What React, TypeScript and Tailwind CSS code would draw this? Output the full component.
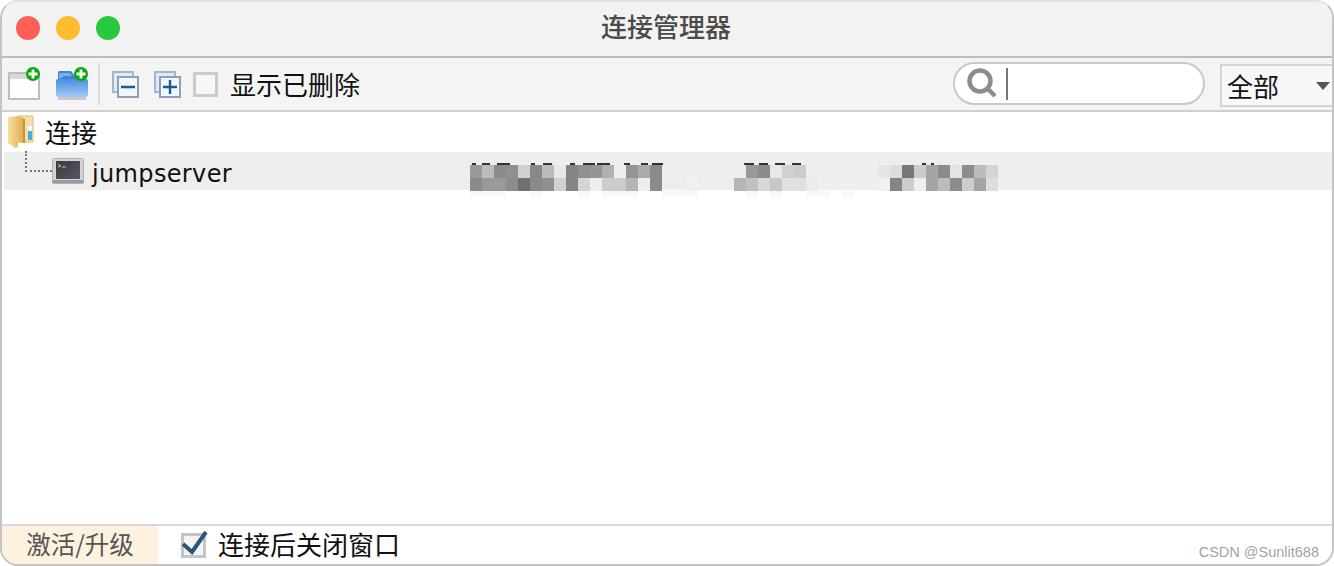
import React from 'react';

const cjk = { fontFamily: '"Noto Sans CJK SC", sans-serif' };
const dejavu = { fontFamily: '"DejaVu Sans", sans-serif' };

// mosaic over the host / port / user columns, 12px cells, null = nothing drawn
const mosaicTop: (string | null)[] = [
  '#999', '#bbb', '#8c8c8c', '#909090', '#d0d0d0', '#888', '#bbb', '#e8e8e8', '#858585', '#909090', '#959595', '#b0b0b0', null, '#959595', '#aaa', '#8a8a8a',
  null, null, null, null, null, null, null,
  '#999', '#8c8c8c', '#e8e8e8', '#d0d0d0', '#ccc',
  null, null, null, null, null, null,
  '#e6e6e6', '#ddd', '#777', '#ccc', '#a5a5a5', '#8a8a8a', '#e4e4e4', '#8c8c8c', '#bbb', '#d4d4d4',
];
const mosaicMid: (string | null)[] = [
  '#8a8a8a', '#999', '#999', '#8c8c8c', '#707070', '#8a8a8a', '#909090', '#d0d0d0', '#858585', '#d5d5d5', '#eee', '#ccc', '#ccc', '#b5b5b5', '#eee', '#8a8a8a',
  null, null, '#f0f0f0', null, null, null,
  '#b5b5b5', '#c0c0c0', '#d8d8d8', '#c8c8c8', '#e0e0e0', '#e0e0e0',
  '#ebebeb', null, null, null, null, null,
  '#f0f0f0', '#858585', '#ccc', '#eee', '#a5a5a5', '#bbb', '#8c8c8c', '#ccc', '#a5a5a5', '#ddd',
];
const mosaicLow: (string | null)[] = [
  '#f8f8f8', '#f8f8f8', '#f8f8f8', null, null, '#f8f8f8', null, null, null, '#f8f8f8', null, '#f8f8f8', '#f8f8f8', '#f8f8f8', null, null,
  '#f8f8f8', '#f8f8f8', '#f8f8f8', null, null, null,
  null, '#f8f8f8', null, '#f8f8f8', null, null,
  '#f8f8f8', '#f8f8f8', null, '#f8f8f8', null, null,
  null, null, null, null, null, null, null, null, null, null,
];

// dark specks above the mosaic, [left, width] inside the row
const specks: [number, number][] = [
  [468, 4], [478, 8], [493, 13], [527, 4], [539, 9], [566, 5], [579, 12], [593, 13], [620, 6], [637, 7], [648, 11],
  [740, 10], [755, 9], [771, 10], [788, 9], [918, 4], [927, 3],
];

const MosaicRow = ({ cells, h }: { cells: (string | null)[]; h: string }) => (
  <div className={`flex ${h}`}>
    {cells.map((c, i) => (
      <div key={i} className="w-[12px] shrink-0" style={{ backgroundColor: c ?? 'transparent' }} />
    ))}
  </div>
);

const GreenPlus = ({ x, y }: { x: number; y: number }) => (
  <g transform={`translate(${x} ${y})`}>
    <circle cx="0" cy="0" r="7" fill="#0aa80a" />
    <path d="M-4.5 0H4.5M0 -4.5V4.5" stroke="#fff" strokeWidth="2.8" />
  </g>
);

const NewSessionIcon = () => (
  <svg width="34" height="34" viewBox="0 0 34 34" className="shrink-0">
    <rect x="1" y="6" width="30" height="26" fill="#fff" stroke="#bdbdbd" strokeWidth="2" />
    <rect x="2" y="7" width="28" height="5" fill="#d8d8d8" />
    <GreenPlus x={25} y={7} />
  </svg>
);

const NewFolderIcon = () => (
  <svg width="34" height="34" viewBox="0 0 34 34" className="shrink-0">
    <defs>
      <linearGradient id="fold" x1="0" y1="0" x2="0" y2="1">
        <stop offset="0" stopColor="#4a8fe0" />
        <stop offset="1" stopColor="#a4c8f4" />
      </linearGradient>
    </defs>
    <path d="M3 4H15L18 8H30V14H2V5Z" fill="#3b84dc" />
    <path d="M3 6H14L16 9H8L3 12Z" fill="#7db0ea" />
    <rect x="0" y="12" width="32" height="18" rx="2" fill="url(#fold)" />
    <rect x="2" y="30" width="28" height="3" fill="#c9c9c9" />
    <GreenPlus x={25} y={7} />
  </svg>
);

const StackIcon = ({ plus }: { plus?: boolean }) => (
  <svg width="28" height="28" viewBox="0 0 28 28" className="shrink-0">
    <rect x="1" y="1" width="20" height="20" fill="#d9edf8" stroke="#a5b4cc" strokeWidth="2" />
    <rect x="6" y="6" width="20" height="20" fill="#eef7fc" stroke="#929eb8" strokeWidth="2" />
    <path d={plus ? 'M9 16H23M16 9V23' : 'M9 16H23'} stroke="#1f5a8a" strokeWidth="2.4" />
  </svg>
);

const TreeFolderIcon = () => (
  <svg width="28" height="34" viewBox="0 0 28 34" className="shrink-0">
    <defs>
      <linearGradient id="tf" x1="0" y1="0" x2="1" y2="0">
        <stop offset="0" stopColor="#f8df9c" />
        <stop offset="1" stopColor="#dca94a" />
      </linearGradient>
    </defs>
    <path d="M11 1H26V27H11Z" fill="#f6e0a8" stroke="#e0c070" />
    <rect x="21" y="15" width="4" height="10" fill="#3fb0e0" />
    <rect x="21" y="11" width="4" height="5" fill="#fff" />
    <path d="M1 2L11 1L18 4V28L11 27V32L8 33L1 28Z" fill="url(#tf)" />
    <path d="M17 4V28" stroke="#c48f2c" strokeWidth="1.5" />
  </svg>
);

const TerminalIcon = () => (
  <svg width="32" height="26" viewBox="0 0 32 26" className="shrink-0">
    <defs>
      <linearGradient id="tm" x1="0" y1="0" x2="1" y2="1">
        <stop offset="0" stopColor="#3a3a3a" />
        <stop offset="1" stopColor="#55566a" />
      </linearGradient>
    </defs>
    <rect x="0.5" y="0.5" width="31" height="25" rx="1" fill="#d4d4d4" stroke="#b0b0b0" />
    <rect x="4" y="3" width="24" height="18" fill="url(#tm)" />
    <rect x="0.5" y="22" width="31" height="3" fill="#9a9a9a" />
    <path d="M6 6L9 8L6 9M10 9H14" stroke="#bdbdbd" strokeWidth="1" fill="none" />
  </svg>
);

export default function App() {
  return (
    <div className="h-[566px] w-[1334px] bg-white overflow-hidden">
      <div className="h-full flex flex-col rounded-[18px] border-2 border-[#c4c4c4] border-t-[#e4e4e4] overflow-hidden bg-white" style={cjk}>
        {/* Title bar */}
        <div className="h-[56px] shrink-0 bg-[#f2f2f2] border-b-2 border-[#bdbdbd] flex items-center relative pl-[14px] pb-[2px] gap-4">
          <div className="w-6 h-6 rounded-full bg-[#ff5f57]" />
          <div className="w-6 h-6 rounded-full bg-[#febc2e]" />
          <div className="w-6 h-6 rounded-full bg-[#28c840]" />
          <div className="absolute inset-0 flex items-center justify-center text-[26px] font-medium text-[#4a4a4a] pb-[8px] pr-[2px]">
            连接管理器
          </div>
        </div>

        {/* Toolbar */}
        <div className="h-[54px] shrink-0 bg-[#f4f4f4] border-b-2 border-[#cfcfcf] flex items-center pl-[6px]">
          <NewSessionIcon />
          <div className="ml-[14px]">
            <NewFolderIcon />
          </div>
          <div className="ml-[8px] w-[2px] h-[42px] bg-[#dedede]" />
          <div className="ml-[12px] mt-[2px]">
            <StackIcon />
          </div>
          <div className="ml-[14px] mt-[2px]">
            <StackIcon plus />
          </div>
          <div className="ml-[11px] w-[25px] h-[25px] border-[3px] border-[#cbcbcb] bg-[#f7f7f7]" />
          <span className="ml-[12px] text-[26px] leading-none text-[#111]">显示已删除</span>

          <div className="ml-auto w-[252px] h-[43px] mb-[1px] rounded-[22px] border-2 border-[#c9c9c9] bg-white flex items-center pl-[12px]">
            <svg width="31" height="31" viewBox="0 0 31 31" className="shrink-0">
              <circle cx="13" cy="13" r="10.5" fill="none" stroke="#8c8c8c" strokeWidth="4.5" />
              <path d="M20 20L28 28" stroke="#8c8c8c" strokeWidth="4.5" />
            </svg>
            <div className="ml-[8px] w-[2px] h-[32px] bg-[#777]" />
          </div>
          <div className="ml-[15px] w-[112px] h-[43px] border-2 border-r-0 border-[#d4d4d4] bg-[#f8f8f8] flex items-center pl-[5px] mt-[3px]">
            <span className="text-[26px] leading-none text-[#111]">全部</span>
            <svg width="14" height="8" viewBox="0 0 14 8" className="ml-auto mr-[2px] mt-[1px]">
              <path d="M0 0H14L7 8Z" fill="#555" />
            </svg>
          </div>
        </div>

        {/* Session tree */}
        <div className="flex-1 min-h-0 bg-white">
          <div className="h-[40px] flex items-center pl-[5px] gap-[10px]">
            <TreeFolderIcon />
            <span className="text-[26px] leading-none text-[#111]">连接</span>
          </div>
          <div className="relative ml-[2px] h-[38px] bg-[#eeeeee] flex items-center">
            <div className="absolute left-[21px] top-[-1px] w-[27px] h-[21px] border-l-2 border-b-2 border-dotted border-[#777]" />
            <div className="ml-[48px]">
              <TerminalIcon />
            </div>
            <span className="ml-[8px] mt-[6px] text-[24px] leading-none text-[#111] tracking-[0.35px]" style={dejavu}>
              jumpserver
            </span>
            {specks.map(([left, width]) => (
              <div key={left} className="absolute top-[11px] h-[2px] bg-[#333]" style={{ left, width }} />
            ))}
            <div className="absolute left-[466px] top-[13px]">
              <MosaicRow cells={mosaicTop} h="h-[13px]" />
              <MosaicRow cells={mosaicMid} h="h-[13px]" />
              <MosaicRow cells={mosaicLow} h="h-[6px]" />
            </div>
          </div>
        </div>

        {/* Footer */}
        <div className="h-[40px] shrink-0 border-t-2 border-[#d8d8d8] bg-white flex items-stretch">
          <div className="w-[156px] bg-[#fdf1df] flex items-center justify-center text-[24.5px] leading-none text-[#555] pb-[2px]">
            激活/升级
          </div>
          <div className="ml-[23px] flex items-center pb-[2px]">
            <svg width="27" height="28" viewBox="0 0 27 28" className="shrink-0 mb-[1px]">
              <rect x="1.5" y="4.5" width="22" height="22" fill="#f4f4f4" stroke="#c4c4c4" strokeWidth="3" />
              <path d="M2 14L11 22L25 2" fill="none" stroke="#2a5878" strokeWidth="4" />
            </svg>
            <span className="ml-[10px] text-[26px] leading-none text-[#111]">连接后关闭窗口</span>
          </div>
          <div className="ml-auto self-end mb-[2px] mr-[13px] text-[14.5px] leading-[20px] text-[#a3a3a3]" style={{ fontFamily: '"Liberation Sans", sans-serif' }}>
            CSDN @Sunlit688
          </div>
        </div>
      </div>
    </div>
  );
}
